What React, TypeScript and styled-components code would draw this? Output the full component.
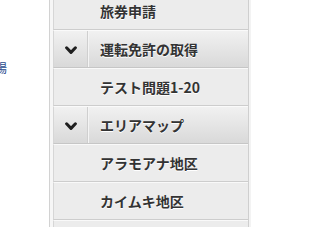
import styled, { createGlobalStyle } from 'styled-components'

const GlobalStyle = createGlobalStyle`
  html, body {
    margin: 0;
    padding: 0;
    background: #ffffff;
    overflow: hidden;
  }
`

type Item = { label: string; header?: boolean }

const items: Item[] = [
  { label: '旅券申請' },
  { label: '運転免許の取得', header: true },
  { label: 'テスト問題1-20' },
  { label: 'エリアマップ', header: true },
  { label: 'アラモアナ地区' },
  { label: 'カイムキ地区' },
  { label: '' },
]

function Chevron() {
  return (
    <svg width="12" height="9" viewBox="0 0 12 9">
      <path d="M1.6 1.8 L6 6.4 L10.4 1.8" fill="none" stroke="#1f1f1f" strokeWidth="3" strokeLinecap="round" strokeLinejoin="round" />
    </svg>
  )
}

export default function App() {
  return (
    <>
      <GlobalStyle />
      <Page>
        <SidePane>
          <SideLink>場</SideLink>
        </SidePane>
        <Menu>
          {items.map((item, i) =>
            item.header ? (
              <HeaderRow key={i}>
                <ToggleCell>
                  <Chevron />
                </ToggleCell>
                <Label $header>{item.label}</Label>
              </HeaderRow>
            ) : (
              <Row key={i}>
                <Label>{item.label}</Label>
              </Row>
            ),
          )}
        </Menu>
      </Page>
    </>
  )
}

const Page = styled.div`
  display: flex;
  align-items: flex-start;
  height: 227px;
  overflow: hidden;
  font-family: 'Noto Sans CJK JP', 'Liberation Sans', sans-serif;
`

const SidePane = styled.div`
  width: 49px;
  flex-shrink: 0;
  overflow: hidden;
  padding-top: 61px;
`

const SideLink = styled.a`
  display: block;
  margin-left: -5px;
  white-space: nowrap;
  font-size: 12px;
  line-height: 14px;
  color: #2a4c8e;
`

const Menu = styled.div`
  width: 195px;
  margin-top: -8px;
  padding-left: 3px;
  background: #f6f6f6;
  border-left: 1px solid #d2d2d2;
  border-right: 1px solid #cfcfcf;
  box-shadow: 2px 0 0 #f3f3f3;
`

const Row = styled.div`
  display: flex;
  align-items: center;
  height: 36px;
  padding-left: 46px;
  background: #ececec;
  border-left: 1px solid #d6d6d6;
  border-top: 1px solid #f9f9f9;
  border-bottom: 1px solid #cdcdcd;
`

const HeaderRow = styled.div`
  display: flex;
  align-items: stretch;
  height: 36px;
  background: linear-gradient(#f1f1f1, #d9d9d9);
  border-left: 1px solid #d6d6d6;
  border-top: 1px solid #fafafa;
  border-bottom: 1px solid #c6c6c6;
`

const ToggleCell = styled.div`
  display: flex;
  align-items: center;
  justify-content: center;
  width: 33px;
  padding-top: 2px;
  border-right: 1px solid #cfcfcf;
  box-shadow: 1px 0 0 #f4f4f4;
`

const Label = styled.span<{ $header?: boolean }>`
  align-self: center;
  margin-left: ${(p) => (p.$header ? '12px' : '0')};
  font-size: 14px;
  font-weight: 700;
  color: #333333;
  text-shadow: 0 1px 0 #ffffff;
  white-space: nowrap;
`
